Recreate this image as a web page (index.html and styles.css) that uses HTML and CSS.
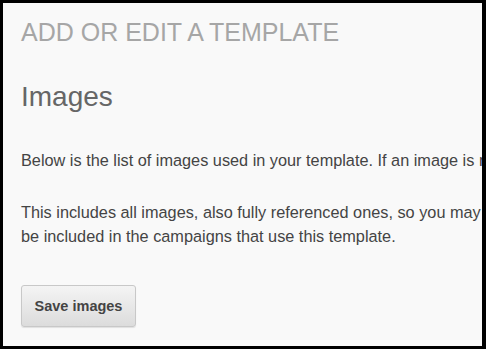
FILE: index.html
```html
<!DOCTYPE html>
<html>
<head>
<meta charset="utf-8">
<link rel="stylesheet" href="styles.css">
</head>
<body>
<div class="panel">
  <h1 class="page-title">ADD OR EDIT A TEMPLATE</h1>
  <h2 class="section-title">Images</h2>
  <p class="text">Below is the list of images used in your template. If an image is not found, you can upload it here.</p>
  <p class="text">This includes all images, also fully referenced ones, so you may want to upload local copies. They will<br>be included in the campaigns that use this template.</p>
  <button class="btn">Save images</button>
</div>
</body>
</html>
```
FILE: styles.css
```css
html, body {
  margin: 0;
  padding: 0;
  height: 100%;
  background: #000;
}
body {
  padding: 3px 4px 3px 3px;
  box-sizing: border-box;
  overflow: hidden;
}
.panel {
  height: 100%;
  background: #f9f9f9;
  padding: 14px 0 0 18px;
  box-sizing: border-box;
  overflow: hidden;
  font-family: "Liberation Sans", Arial, sans-serif;
}
.page-title {
  margin: 0;
  font-size: 25px;
  line-height: 30px;
  font-weight: normal;
  color: #a6a6a6;
  white-space: nowrap;
}
.section-title {
  margin: 34px 0 0 0;
  font-size: 28px;
  line-height: 32px;
  font-weight: normal;
  color: #666;
}
.text {
  margin: 35px 0 0 0;
  font-size: 16.3px;
  line-height: 24px;
  color: #444;
  white-space: nowrap;
}
.text + .text {
  margin-top: 28px;
}
.btn {
  display: block;
  margin-top: 37px;
  width: 115px;
  height: 42px;
  padding: 0;
  font-family: "Liberation Sans", Arial, sans-serif;
  font-size: 14.5px;
  font-weight: bold;
  color: #444;
  border: 1px solid #c8c8c8;
  border-radius: 3px;
  background: linear-gradient(#f4f4f4, #dcdcdc);
  box-shadow: 0 1px 1px rgba(0,0,0,0.1);
}
```
